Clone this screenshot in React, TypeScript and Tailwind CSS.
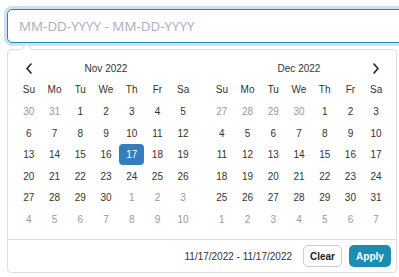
import { ReactNode } from 'react'

type Day = { n: number; off: boolean }

const weekdays = ['Su', 'Mo', 'Tu', 'We', 'Th', 'Fr', 'Sa']

function buildMonth(firstShown: number, prevLen: number, len: number): Day[] {
  // firstShown: first date displayed from previous month
  const days: Day[] = []
  for (let d = firstShown; d <= prevLen; d++) days.push({ n: d, off: true })
  for (let d = 1; d <= len; d++) days.push({ n: d, off: false })
  let next = 1
  while (days.length < 42) days.push({ n: next++, off: true })
  return days
}

const nov = buildMonth(30, 31, 30)
const dec = buildMonth(27, 30, 31)

function Chevron({ dir }: { dir: 'left' | 'right' }) {
  return (
    <svg width="8" height="11" viewBox="0 0 8 11" fill="none">
      <path
        d={dir === 'left' ? 'M6 1L2 5.5L6 10' : 'M2 1L6 5.5L2 10'}
        stroke="#222"
        strokeWidth="1.6"
        strokeLinecap="round"
        strokeLinejoin="round"
      />
    </svg>
  )
}

function Cell({ children, className = '' }: { children: ReactNode; className?: string }) {
  return <div className={`h-[21.6px] flex items-center justify-center ${className}`}>{children}</div>
}

function Month({
  title,
  days,
  left,
  right,
  selected,
}: {
  title: string
  days: Day[]
  left?: boolean
  right?: boolean
  selected?: number
}) {
  return (
    <div className="w-[180px] grid grid-cols-7 text-[10px] text-[#333]">
      <Cell>{left && <Chevron dir="left" />}</Cell>
      <Cell className="col-span-5">{title}</Cell>
      <Cell>{right && <Chevron dir="right" />}</Cell>
      {weekdays.map((w) => (
        <Cell key={w}>{w}</Cell>
      ))}
      {days.map((d, i) => {
        const isSel = !d.off && d.n === selected
        return (
          <Cell
            key={i}
            className={
              isSel
                ? 'bg-[#357ebd] text-white rounded-[4px] mx-[0.5px]'
                : d.off
                  ? 'text-[#999]'
                  : ''
            }
          >
            {d.n}
          </Cell>
        )
      })}
    </div>
  )
}

export default function App() {
  return (
    <div className="w-[399px] h-[277px] bg-white overflow-hidden font-['Liberation_Sans',Arial,sans-serif]">
      <div className="pl-[7px] pt-[9px]">
        <div className="w-[420px] h-[34px] rounded-[5px] border border-[#1b8db3] shadow-[0_0_0_3px_#cfe0f6] flex items-center pl-[11px]">
          <span className="text-[13.4px] text-[#aeaac4] font-['Open_Sans',sans-serif]">
            MM-DD-YYYY - MM-DD-YYYY
          </span>
        </div>

        <div className="relative mt-[6px] w-[390px] h-[224px] border border-[#ddd] rounded-[4px] bg-white">
          <div className="absolute -top-[5px] left-[14px] w-[9px] h-[9px] rotate-45 bg-white border-t border-l border-[#ddd]" />
          <div className="flex gap-[13px] pl-[8px] pt-[7.5px] pb-[9px] border-b border-[#ddd]">
            <Month title="Nov 2022" days={nov} left selected={17} />
            <Month title="Dec 2022" days={dec} right />
          </div>
          <div className="flex items-center justify-end gap-[7px] pr-[5px] h-[32px]">
            <span className="text-[10px] text-[#333] mr-[4px]">11/17/2022 - 11/17/2022</span>
            <button className="h-[22px] w-[39px] rounded-[5px] border border-[#ccc] bg-white text-[10px] font-bold text-[#222]">
              Clear
            </button>
            <button className="h-[22px] w-[42px] rounded-[5px] bg-[#1b8db3] text-[10px] font-bold text-white">
              Apply
            </button>
          </div>
        </div>
      </div>
    </div>
  )
}
